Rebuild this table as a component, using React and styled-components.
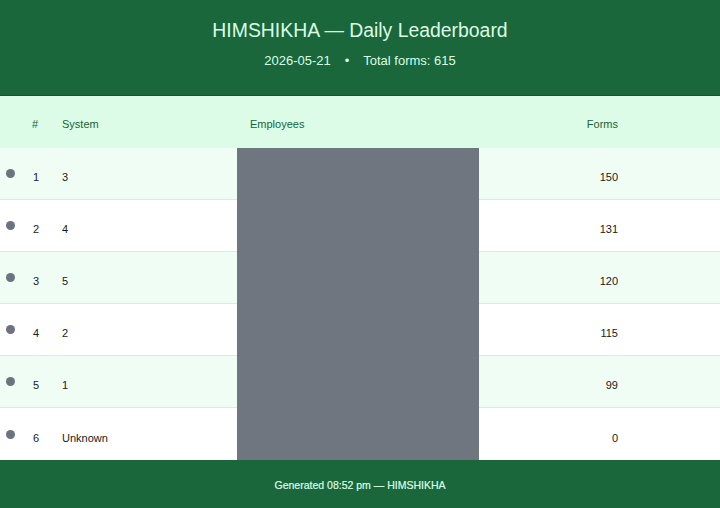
import React from "react";
import styled, { createGlobalStyle } from "styled-components";

const GlobalStyle = createGlobalStyle`
  html, body {
    margin: 0;
    padding: 0;
    background: #ffffff;
    font-family: "Liberation Sans", "Noto Sans", sans-serif;
  }
`;

const Page = styled.div`
  width: 720px;
  height: 508px;
  display: flex;
  flex-direction: column;
  overflow: hidden;
`;

const Header = styled.header`
  height: 96px;
  box-sizing: border-box;
  background: #19673a;
  border-bottom: 1px solid #135530;
  display: flex;
  flex-direction: column;
  align-items: center;
  padding-top: 18px;
  gap: 11px;
  color: #dcfce7;
`;

const Title = styled.h1`
  margin: 0;
  font-size: 19.4px;
  line-height: 24px;
  font-weight: 400;
`;

const Subtitle = styled.div`
  font-size: 13px;
  line-height: 16px;
  display: flex;
  gap: 14px;
`;

const Row = styled.div`
  display: grid;
  grid-template-columns: 24px 26px 187px 242px 139px 102px;
  height: 52px;
  padding-top: ${(p) => (p.$head ? 3 : 7)}px;
  align-items: center;
  background: ${(p) => (p.$head ? "#dcfce7" : p.$alt ? "#f0fdf4" : "#ffffff")};
  border-bottom: ${(p) => (p.$head || p.$last ? "none" : "1px solid #e3e7e4")};
  box-sizing: border-box;
  font-size: 11px;
  color: ${(p) => (p.$head ? "#166534" : "#1a1a1a")};
`;

const Cell = styled.div`
  text-align: ${(p) => (p.$right ? "right" : "left")};
  padding-left: ${(p) => p.$pl || 0}px;
`;

const Redacted = styled.div`
  align-self: stretch;
  background: ${(p) => (p.$head ? "transparent" : "#6f767f")};
  margin-top: ${(p) => (p.$head ? 0 : -7)}px;
  margin-bottom: ${(p) => (p.$head ? 0 : -1)}px;
  display: flex;
  align-items: center;
  padding-left: 13px;
`;

const Dot = styled.span`
  display: block;
  width: 9px;
  height: 9px;
  border-radius: 50%;
  background: #6b7280;
  margin: -7px 0 0 6px;
`;

const Footer = styled.footer`
  height: 48px;
  background: #19673a;
  color: #dcfce7;
  font-size: 10.5px;
  font-weight: 400;
  -webkit-text-stroke: 0.2px #dcfce7;
  display: flex;
  align-items: center;
  justify-content: center;
  padding-top: 2px;
  box-sizing: border-box;
`;

const rows = [
  { rank: 1, system: "3", forms: 150 },
  { rank: 2, system: "4", forms: 131 },
  { rank: 3, system: "5", forms: 120 },
  { rank: 4, system: "2", forms: 115 },
  { rank: 5, system: "1", forms: 99 },
  { rank: 6, system: "Unknown", forms: 0 },
];

export default function App() {
  return (
    <Page>
      <GlobalStyle />
      <Header>
        <Title>HIMSHIKHA — Daily Leaderboard</Title>
        <Subtitle>
          <span>2026-05-21</span>
          <span>•</span>
          <span>Total forms: 615</span>
        </Subtitle>
      </Header>
      <Row $head>
        <Cell />
        <Cell $pl={8}>#</Cell>
        <Cell $pl={12}>System</Cell>
        <Redacted $head>Employees</Redacted>
        <Cell $right>Forms</Cell>
        <Cell />
      </Row>
      {rows.map((r, i) => (
        <Row key={r.rank} $alt={i % 2 === 0} $last={i === rows.length - 1}>
          <Cell>
            <Dot />
          </Cell>
          <Cell $pl={9}>{r.rank}</Cell>
          <Cell $pl={12}>{r.system}</Cell>
          <Redacted />
          <Cell $right>{r.forms}</Cell>
          <Cell />
        </Row>
      ))}
      <Footer>Generated 08:52 pm — HIMSHIKHA</Footer>
    </Page>
  );
}
